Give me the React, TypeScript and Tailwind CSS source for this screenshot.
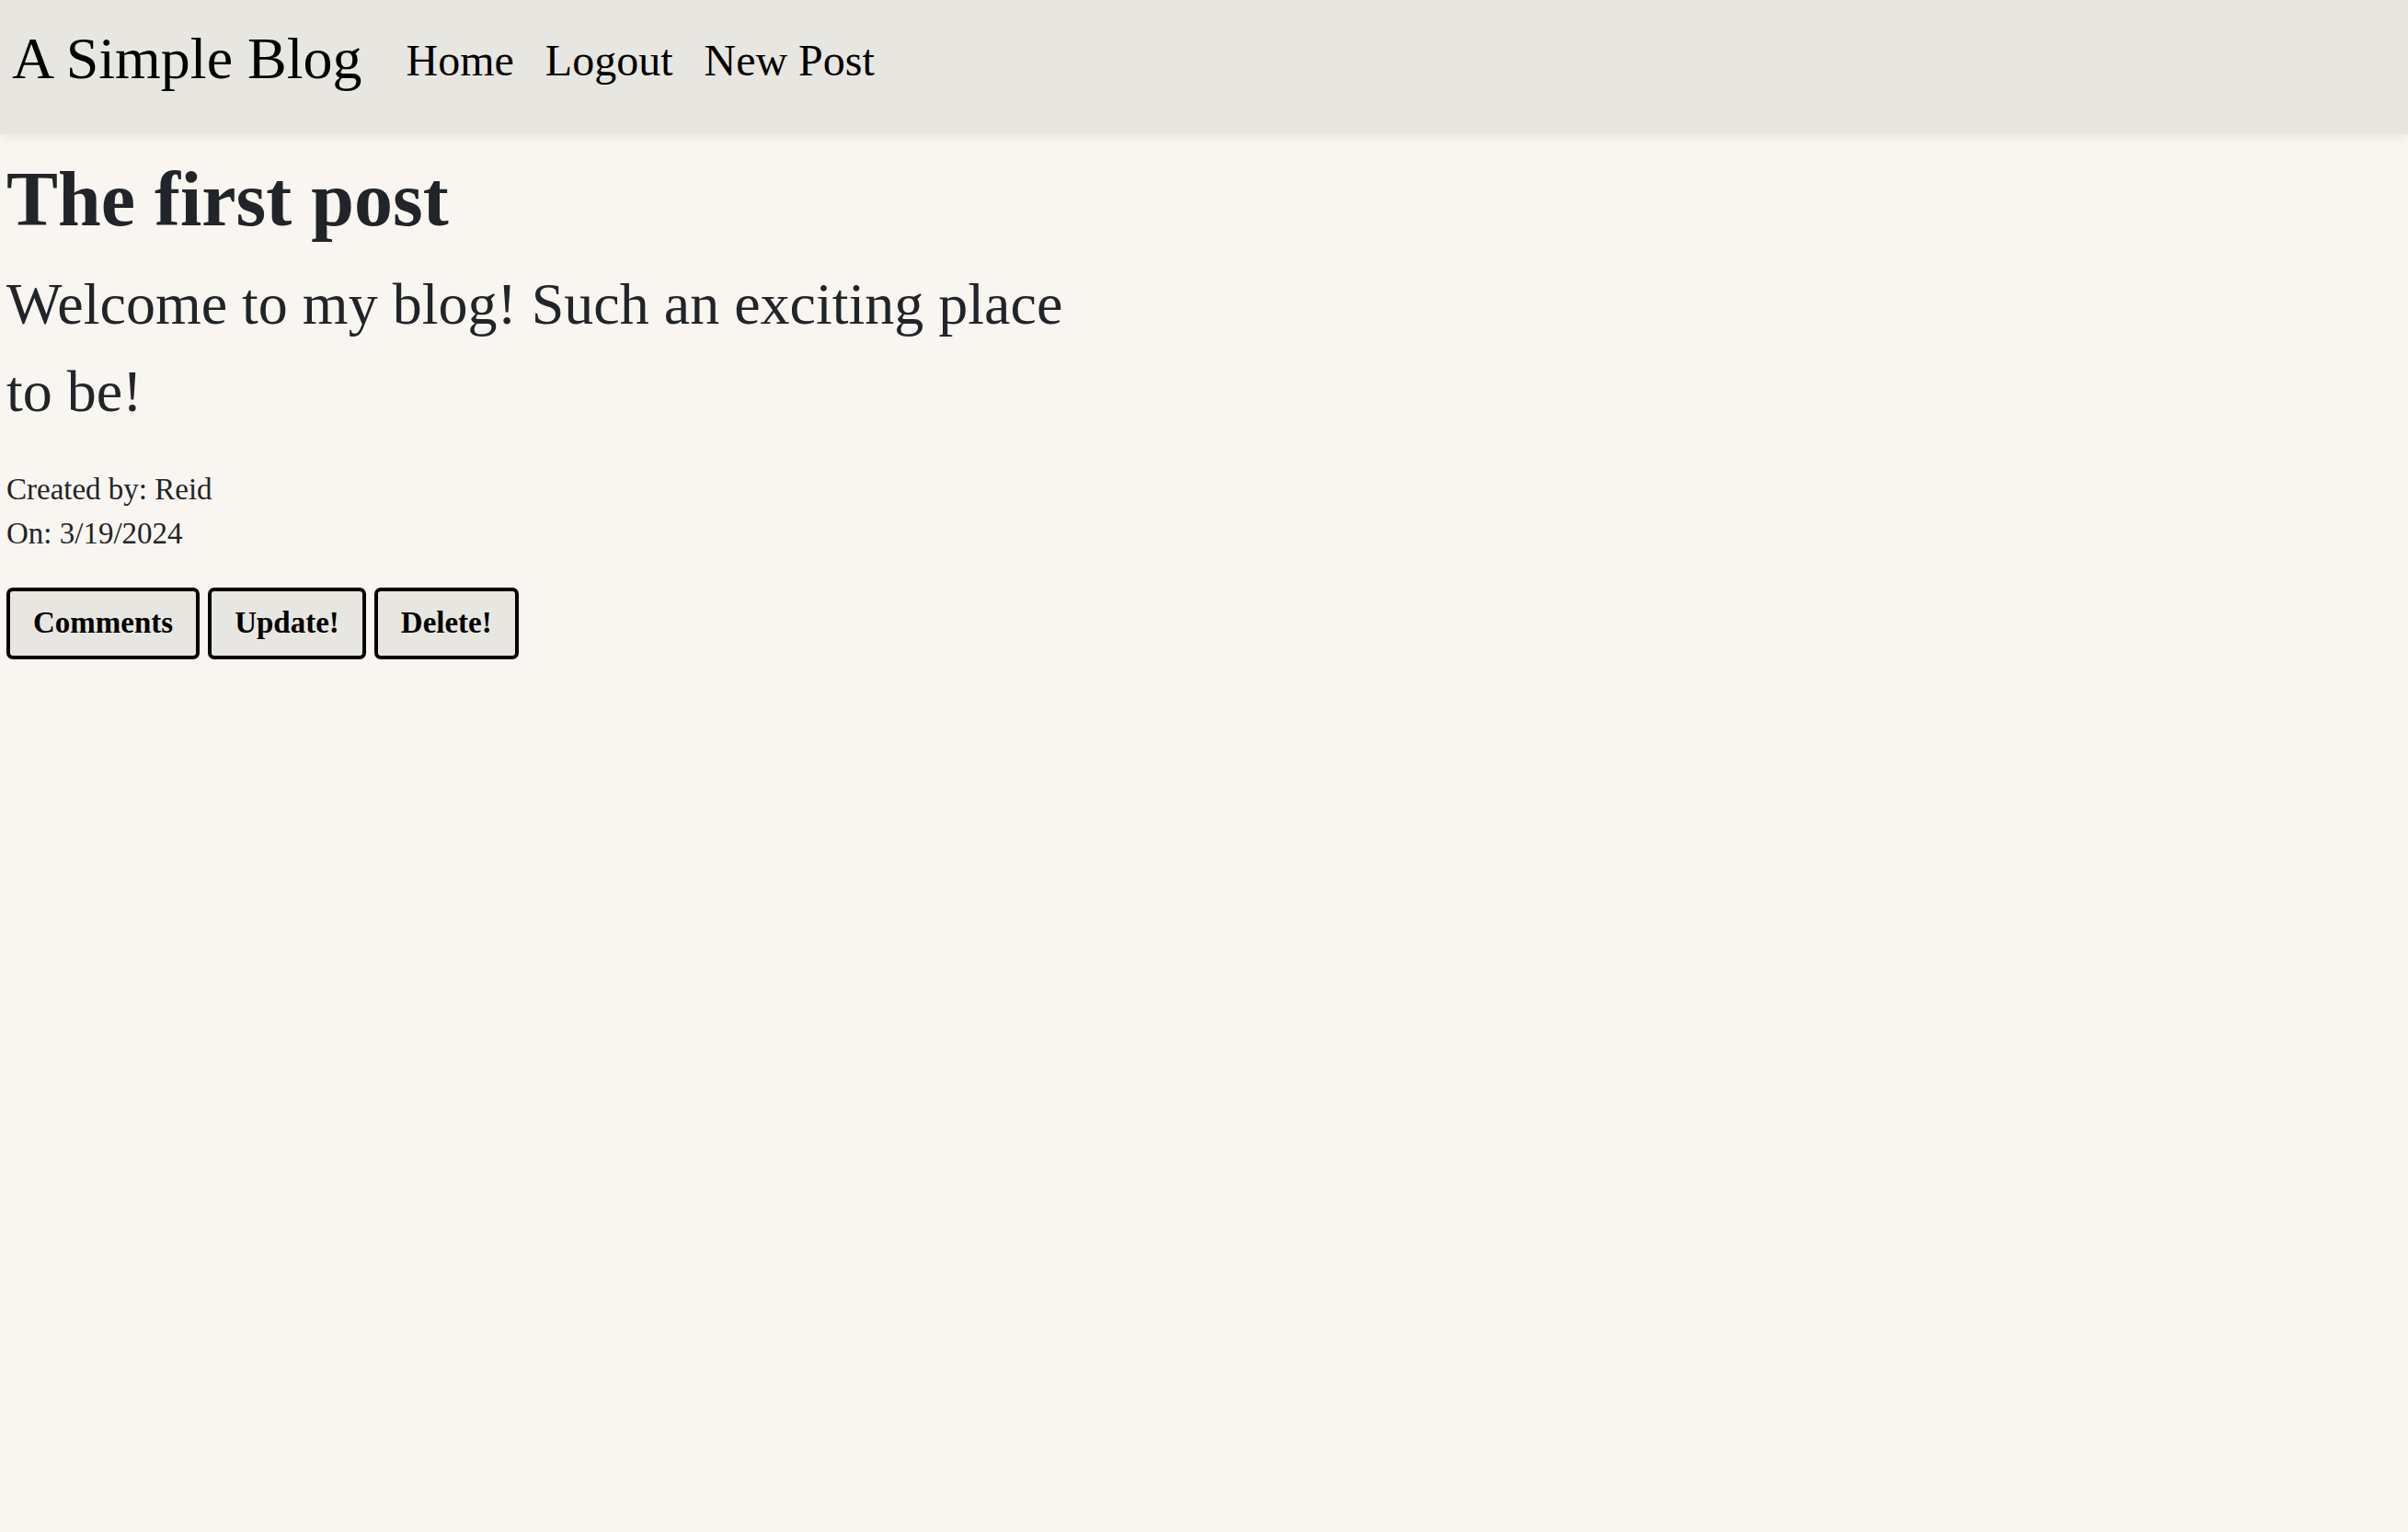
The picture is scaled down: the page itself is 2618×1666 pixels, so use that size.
import * as React from 'react';

const NAV = ['Home', 'Logout', 'New Post'];
const ACTIONS = ['Comments', 'Update!', 'Delete!'];

export default function App() {
  return (
    <div className="min-h-screen bg-[#f9f6f1] font-['Liberation_Serif',serif] text-[#212529]">
      {/* Navbar */}
      <header className="h-[146px] flex items-center pl-[13px] pb-[14px] bg-[#e8e6e1] shadow-[0_4px_10px_rgba(0,0,0,0.06)] text-black">
        <a className="text-[64px] leading-none mr-[48px] pb-[4px]">A Simple Blog</a>
        <nav className="flex items-center gap-[34px]">
          {NAV.map(item => (
            <a key={item} className="text-[48px] leading-none">{item}</a>
          ))}
        </nav>
      </header>

      {/* Post */}
      <main className="px-[7px]">
        <h1 className="mt-[21px] text-[84px] leading-[1.2] font-bold">The first post</h1>
        <p className="mt-[15px] max-w-[1180px] text-[64px] leading-[95px]">
          Welcome to my blog! Such an exciting place to be!
        </p>
        <div className="mt-[35px] text-[33px] leading-[48px]">
          <div>Created by: Reid</div>
          <div>On: 3/19/2024</div>
        </div>
        <div className="mt-[35px] flex gap-[9px]">
          {ACTIONS.map(label => (
            <button
              key={label}
              className="h-[78px] px-[25px] border-4 border-black rounded-[7px] bg-[#e8e6e1] text-black text-[33px] font-bold"
            >
              {label}
            </button>
          ))}
        </div>
      </main>
    </div>
  );
}
